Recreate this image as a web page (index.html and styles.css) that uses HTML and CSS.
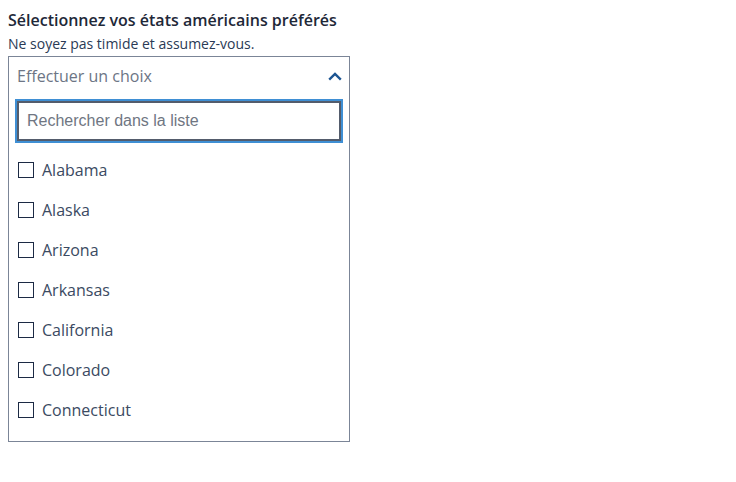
FILE: index.html
```html
<!DOCTYPE html>
<html lang="fr">
<head>
<meta charset="utf-8">
<title>Sélection</title>
<link rel="stylesheet" href="styles.css">
</head>
<body>
<div class="field">
  <div class="title">Sélectionnez vos états américains préférés</div>
  <div class="hint">Ne soyez pas timide et assumez-vous.</div>
  <div class="combo">
    <div class="combo-head">
      <span class="combo-placeholder">Effectuer un choix</span>
      <svg class="chevron" width="14" height="9" viewBox="0 0 14 9"><path d="M1.2 7.6 L7 2 L12.8 7.6" fill="none" stroke="#1d5592" stroke-width="2.4"/></svg>
    </div>
    <div class="search-wrap">
      <input class="search" type="text" placeholder="Rechercher dans la liste" autofocus>
    </div>
    <ul class="options">
      <li class="option"><span class="box"></span><span>Alabama</span></li>
      <li class="option"><span class="box"></span><span>Alaska</span></li>
      <li class="option"><span class="box"></span><span>Arizona</span></li>
      <li class="option"><span class="box"></span><span>Arkansas</span></li>
      <li class="option"><span class="box"></span><span>California</span></li>
      <li class="option"><span class="box"></span><span>Colorado</span></li>
      <li class="option"><span class="box"></span><span>Connecticut</span></li>
    </ul>
  </div>
</div>
</body>
</html>
```
FILE: styles.css
```css
html, body {
  margin: 0;
  padding: 0;
  background: #ffffff;
}
body {
  padding: 8px;
  font-family: "Open Sans", "Noto Sans", sans-serif;
}
.field {
  width: 342px;
}
.title {
  font-size: 16px;
  font-weight: 600;
  line-height: 24px;
  color: #1e2838;
  white-space: nowrap;
}
.hint {
  font-size: 14px;
  line-height: 24px;
  color: #2a3a55;
  white-space: nowrap;
}
.combo {
  border: 1px solid #7b8597;
  background: #fff;
}
.combo-head {
  display: flex;
  align-items: flex-start;
  justify-content: space-between;
  padding: 7px 7px 0 8px;
  height: 37px;
  box-sizing: border-box;
}
.combo-placeholder {
  font-size: 16px;
  line-height: 24px;
  color: #6c7585;
}
.chevron {
  display: block;
  margin-top: 8px;
}
.search-wrap {
  padding: 7px 8px 0 8px;
}
.search {
  display: block;
  width: 100%;
  height: 40px;
  box-sizing: border-box;
  margin: 0;
  border: 2px solid #535c6c;
  box-shadow: 0 0 0 2px #3f8fd4;
  outline: none;
  padding: 0 8px;
  font-family: "Liberation Sans", Arial, sans-serif;
  font-size: 16px;
  color: #222;
  background: #fff;
}
.search::placeholder {
  color: #6f7682;
}
.options {
  list-style: none;
  margin: 0;
  padding: 9px 0 11px 0;
}
.option {
  display: flex;
  align-items: center;
  gap: 8px;
  height: 40px;
  padding-left: 9px;
  font-size: 16px;
  color: #3b4a62;
}
.box {
  width: 16px;
  height: 16px;
  box-sizing: border-box;
  border: 1.5px solid #1c2a44;
  flex: none;
}
```
